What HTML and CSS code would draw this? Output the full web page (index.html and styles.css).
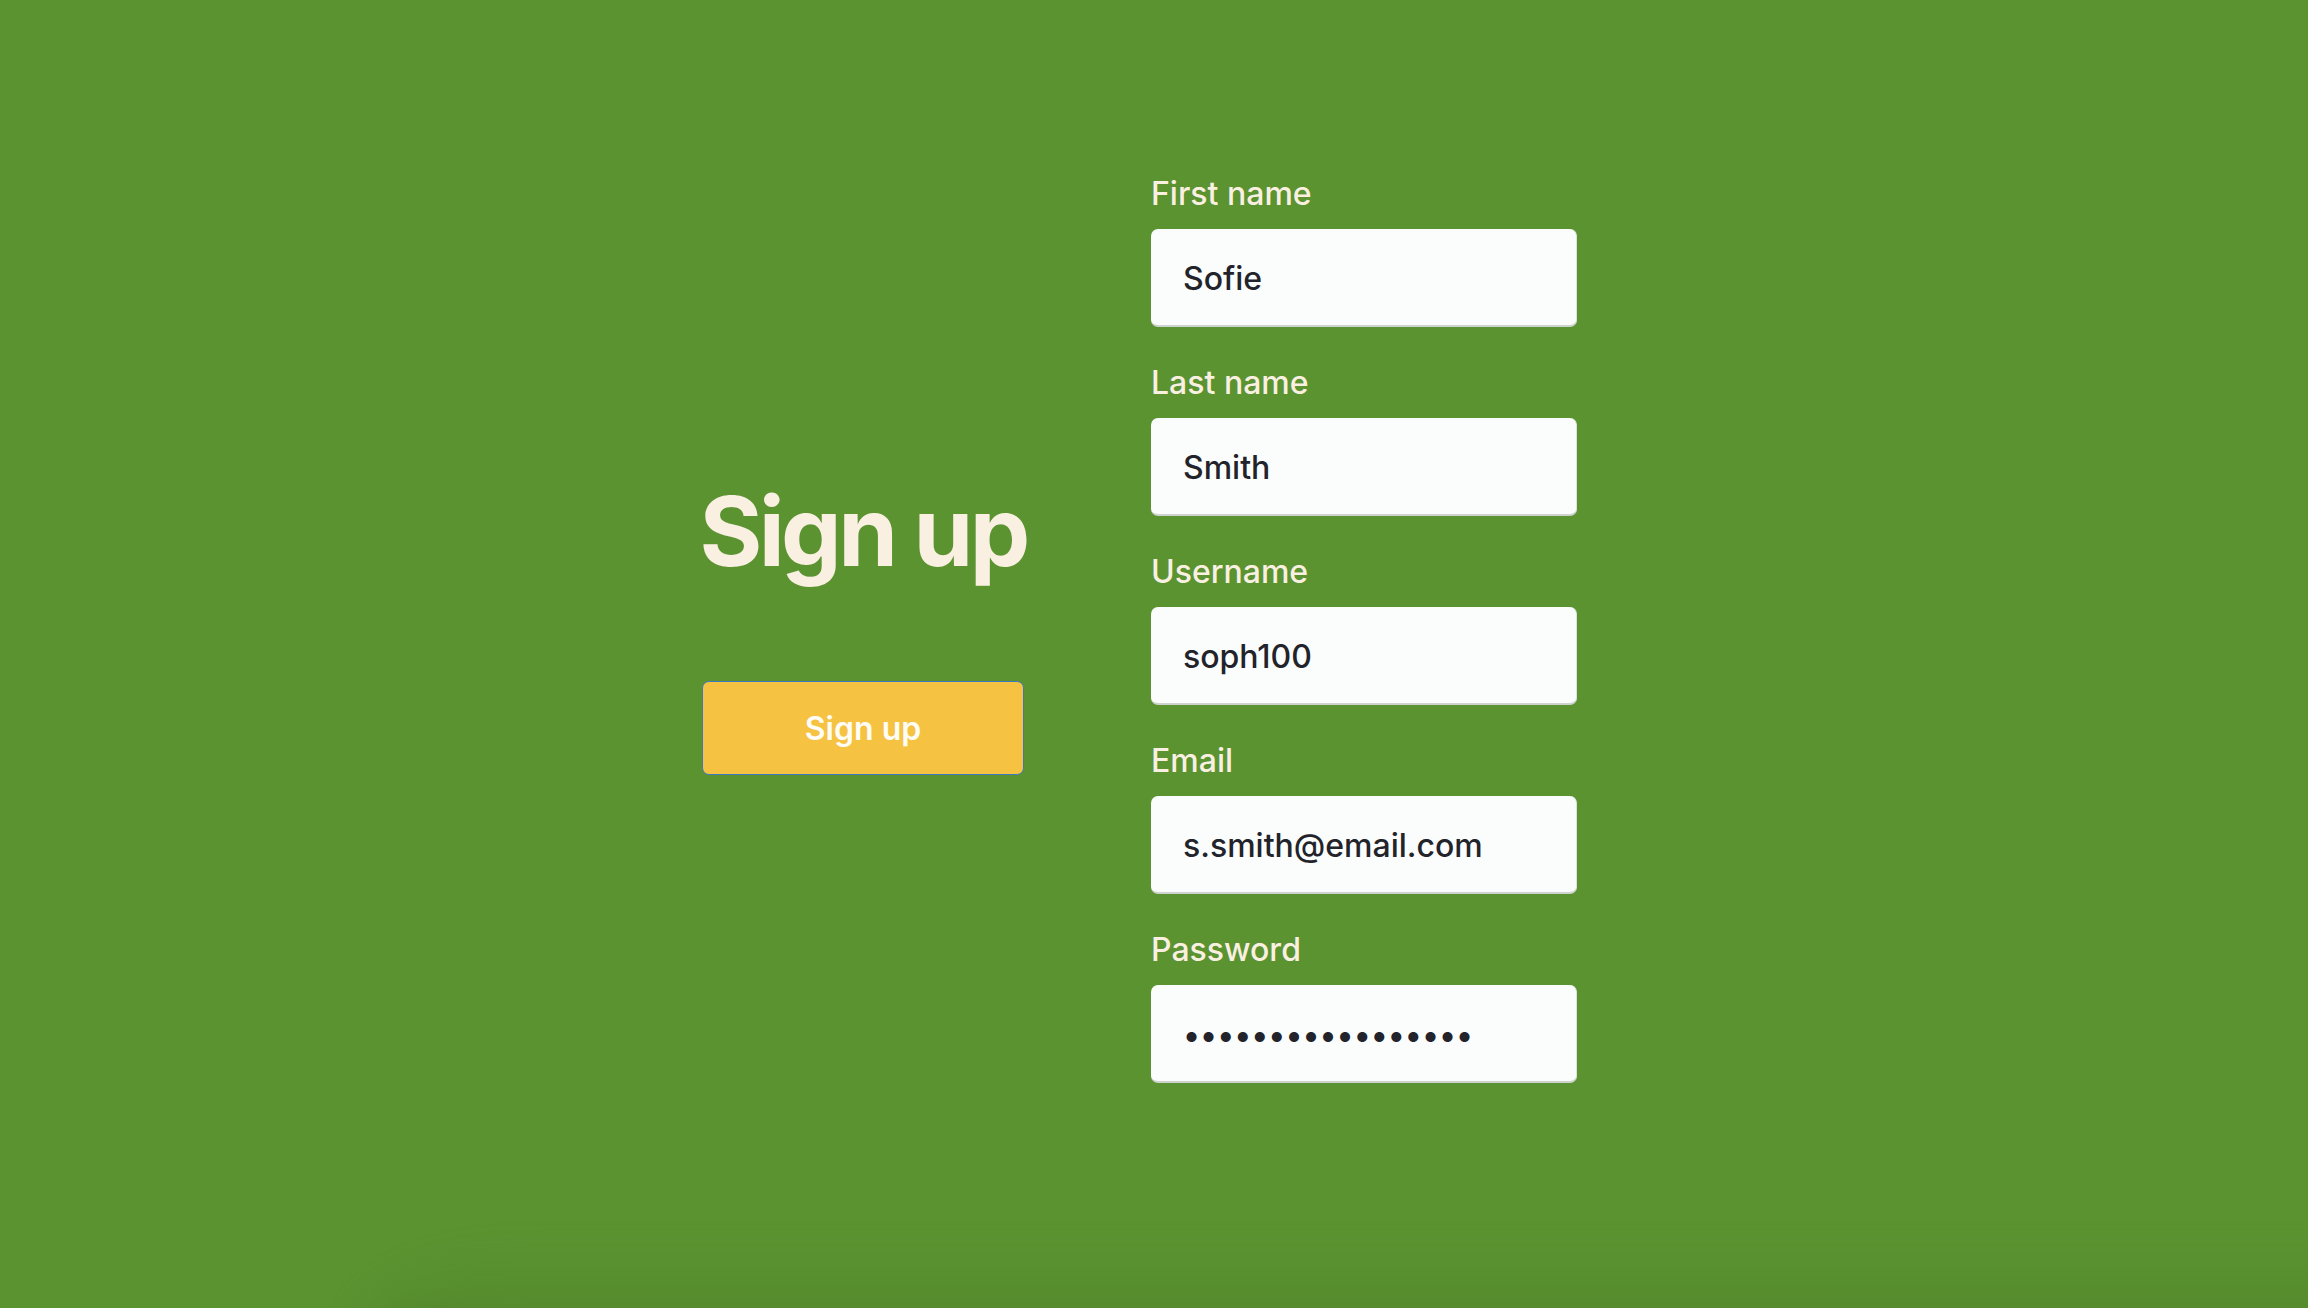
FILE: index.html
```html
<!DOCTYPE html>
<html lang="en">
<head>
<meta charset="utf-8">
<title>Sign up</title>
<link rel="stylesheet" href="styles.css">
</head>
<body>
<main class="page">
  <section class="intro">
    <h1 class="title">Sign up</h1>
    <button class="submit" type="button">Sign up</button>
  </section>
  <form class="form">
    <div class="field">
      <label class="label" for="first">First name</label>
      <input class="input" id="first" type="text" value="Sofie">
    </div>
    <div class="field">
      <label class="label" for="last">Last name</label>
      <input class="input" id="last" type="text" value="Smith">
    </div>
    <div class="field">
      <label class="label" for="user">Username</label>
      <input class="input" id="user" type="text" value="soph100">
    </div>
    <div class="field">
      <label class="label" for="email">Email</label>
      <input class="input" id="email" type="text" value="s.smith@email.com">
    </div>
    <div class="field">
      <label class="label" for="pw">Password</label>
      <input class="input" id="pw" type="password" value="abcdefghijklmnopq">
    </div>
  </form>
</main>
</body>
</html>
```
FILE: styles.css
```css
* { box-sizing: border-box; }
html, body {
  margin: 0;
  height: 100%;
}
body {
  background: #5b9331;
  font-family: Inter, "Noto Sans", sans-serif;
  overflow: hidden;
  position: relative;
}
body::after {
  content: "";
  position: absolute;
  left: 360px;
  right: -60px;
  bottom: -40px;
  height: 100px;
  border-top-left-radius: 200px 100px;
  background: linear-gradient(to bottom, rgba(70, 120, 35, 0) 0%, rgba(75, 125, 38, 0.55) 100%);
  filter: blur(18px);
  pointer-events: none;
}
.page {
  display: flex;
  align-items: center;
  padding-left: 702px;
  padding-top: 174px;
  gap: 127px;
}
.intro {
  width: 322px;
  display: flex;
  flex-direction: column;
  align-items: center;
  margin-top: -9px;
}
.title {
  margin: 0;
  font-size: 96px;
  line-height: 116px;
  font-weight: 700;
  color: #faf0e1;
  letter-spacing: -3.6px;
  white-space: nowrap;
}
.submit {
  margin-top: 92px;
  width: 322px;
  height: 94px;
  background: #f6c242;
  border: 1px solid #3f78c2;
  border-radius: 7px;
  color: #fffdf6;
  font-family: Inter, "Noto Sans", sans-serif;
  font-size: 32px;
  font-weight: 600;
  padding: 0;
}
.form {
  display: flex;
  flex-direction: column;
  gap: 36px;
  width: 426px;
}
.field {
  display: flex;
  flex-direction: column;
  gap: 16px;
}
.label {
  font-size: 32px;
  line-height: 39px;
  font-weight: 500;
  color: #faf0e1;
}
.input {
  height: 98px;
  width: 426px;
  background: #fbfdfc;
  border: none;
  border-bottom: 2px solid #cfd3d0;
  border-right: 1px solid #dfe2df;
  border-radius: 7px;
  padding: 2px 32px 0;
  font-family: Inter, "Noto Sans", sans-serif;
  font-size: 32px;
  font-weight: 500;
  color: #22232b;
  outline: none;
}
```
